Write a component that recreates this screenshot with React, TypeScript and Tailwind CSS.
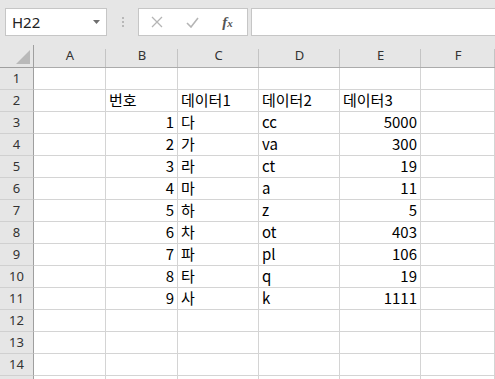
const cols = ["A", "B", "C", "D", "E", "F"];

type Row = [string, string, string, string];

const data: Record<number, Row> = {
  2: ["번호", "데이터1", "데이터2", "데이터3"],
  3: ["1", "다", "cc", "5000"],
  4: ["2", "가", "va", "300"],
  5: ["3", "라", "ct", "19"],
  6: ["4", "마", "a", "11"],
  7: ["5", "하", "z", "5"],
  8: ["6", "차", "ot", "403"],
  9: ["7", "파", "pl", "106"],
  10: ["8", "타", "q", "19"],
  11: ["9", "사", "k", "1111"],
};

const cellFont = { fontFamily: '"Noto Sans CJK KR", "Noto Sans", sans-serif' };

function Cell({ text, right }: { text?: string; right?: boolean }) {
  return (
    <div
      className={`h-[22px] border-r border-b border-[#d4d4d4] bg-white flex items-center overflow-visible whitespace-nowrap text-[15px] text-black ${
        right ? "justify-end pr-[3px]" : "pl-[3px]"
      }`}
    >
      {text}
    </div>
  );
}

export default function App() {
  // row 15 only peeks in at the bottom edge, so its number is left off
  const rows = Array.from({ length: 15 }, (_, i) => i + 1);

  return (
    <div
      className="w-[495px] h-[379px] overflow-hidden bg-[#e6e6e6]"
      style={{ fontFamily: '"Noto Sans", "Noto Sans CJK KR", sans-serif' }}
    >
      {/* formula bar */}
      <div className="h-[45px] flex items-start pt-2 pl-[5px]">
        <div className="w-[102px] h-[28px] bg-white border border-[#c6c6c6] flex items-center pl-[6px] pr-[6px]">
          <span className="text-[15px] text-[#222] flex-1">H22</span>
          <svg width="7" height="4" viewBox="0 0 7 4">
            <path d="M0 0h7L3.5 4z" fill="#6e6e6e" />
          </svg>
        </div>
        <div className="w-[31px] h-[28px] flex flex-col items-center justify-center gap-[2px]">
          <span className="w-[2px] h-[2px] bg-[#b8b8b8]" />
          <span className="w-[2px] h-[2px] bg-[#b8b8b8]" />
          <span className="w-[2px] h-[2px] bg-[#b8b8b8]" />
        </div>
        <div className="w-[110px] h-[28px] bg-white border border-[#c6c6c6] flex items-center">
          <div className="w-[38px] flex justify-center">
            <svg width="12" height="12" viewBox="0 0 12 12">
              <path d="M1 1l10 10M11 1L1 11" stroke="#b5b5b5" strokeWidth="1.3" />
            </svg>
          </div>
          <div className="w-[33px] flex justify-center">
            <svg width="13" height="11" viewBox="0 0 13 11">
              <path d="M1 6l4 4 7-9" stroke="#b5b5b5" strokeWidth="1.6" fill="none" />
            </svg>
          </div>
          <div className="w-[40px] flex justify-center">
            <span
              className="italic font-bold text-[15px] text-[#555] leading-none"
              style={{ fontFamily: '"Liberation Serif", serif' }}
            >
              f<span className="text-[11px]">x</span>
            </span>
          </div>
        </div>
        <div className="flex-1 ml-[3px] -mr-2 h-[28px] bg-white border border-[#c6c6c6]" />
      </div>

      {/* sheet */}
      <div className="grid grid-cols-[34px_72px_72px_81px_81px_81px_1fr]">
        <div className="h-[23px] border-r border-b border-[#9f9f9f] flex items-end justify-end pr-[3px] pb-[3px]">
          <svg width="14" height="14" viewBox="0 0 14 14">
            <path d="M14 0V14H0z" fill="#b9b9b9" />
          </svg>
        </div>
        {cols.map((c) => (
          <div
            key={c}
            className="h-[23px] border-b border-[#ababab] flex items-center justify-center text-[13px] text-[#333] relative"
          >
            {c}
            <span className="absolute right-0 top-[4px] bottom-0 w-px bg-[#c4c4c4]" />
          </div>
        ))}
        {rows.map((r) => {
          const d = data[r];
          return [
            <div
              key={`h${r}`}
              className="h-[22px] border-r border-b border-r-[#9f9f9f] border-b-[#d0d0d0] flex items-center justify-center text-[13px] text-[#333]"
            >
              {r < 15 ? r : ""}
            </div>,
            <Cell key={`a${r}`} />,
            <div key={`b${r}`} style={cellFont} className="contents">
              <Cell text={d?.[0]} right={!!d && r > 2} />
            </div>,
            <div key={`c${r}`} style={cellFont} className="contents">
              <Cell text={d?.[1]} />
            </div>,
            <div key={`d${r}`} style={cellFont} className="contents">
              <Cell text={d?.[2]} />
            </div>,
            <div key={`e${r}`} style={cellFont} className="contents">
              <Cell text={d?.[3]} right={!!d && r > 2} />
            </div>,
            <Cell key={`f${r}`} />,
          ];
        })}
      </div>
    </div>
  );
}
